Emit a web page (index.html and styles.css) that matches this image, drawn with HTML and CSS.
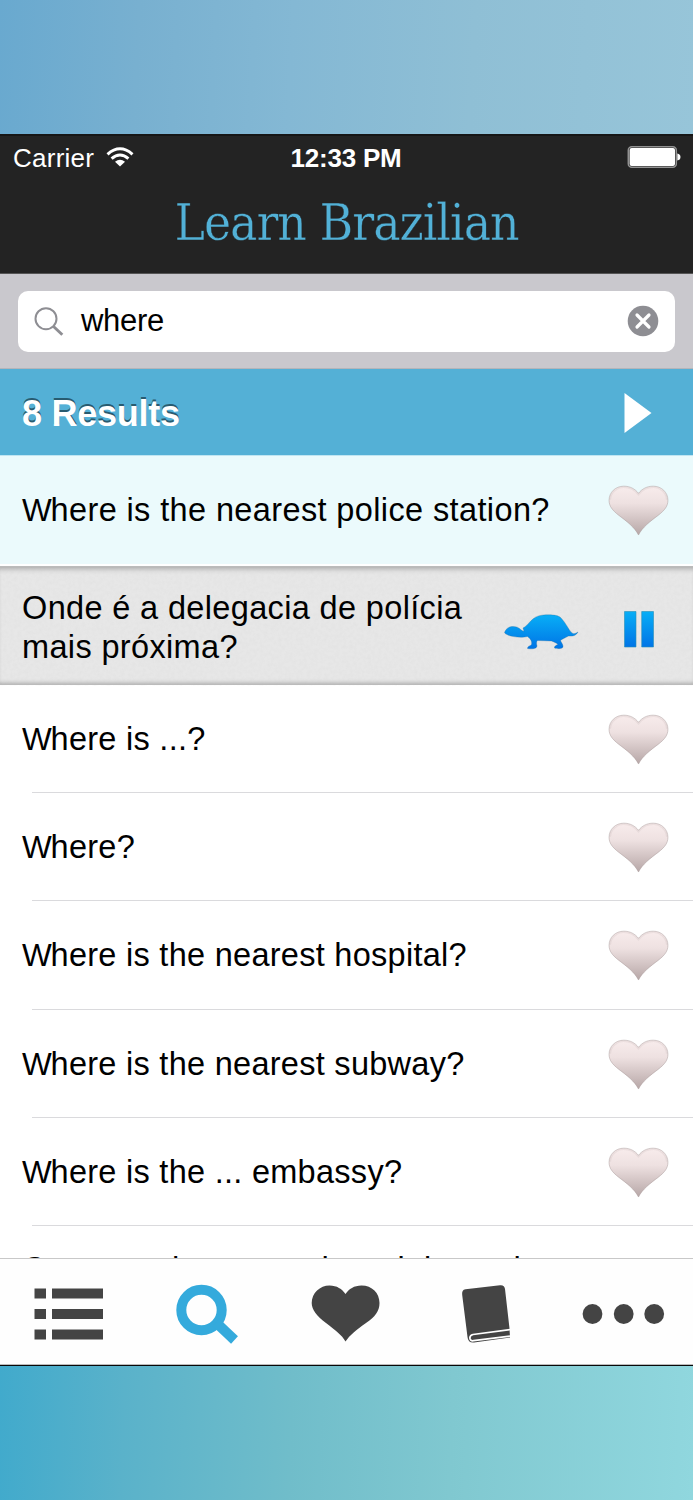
FILE: index.html
```html
<!DOCTYPE html>
<html lang="en">
<head>
<meta charset="utf-8">
<title>Learn Brazilian</title>
<link rel="stylesheet" href="styles.css">
</head>
<body>
<svg class="defs" width="0" height="0" aria-hidden="true">
  <defs>
    <linearGradient id="heartFill" x1="0" y1="0" x2="0" y2="1">
      <stop offset="0" stop-color="#f8ecec"/><stop offset=".35" stop-color="#eee1e1"/><stop offset="1" stop-color="#b7a7a7"/>
    </linearGradient>
    <linearGradient id="blueFill" x1="0" y1="0" x2="0" y2="1">
      <stop offset="0" stop-color="#08aef6"/><stop offset="1" stop-color="#0074e6"/>
    </linearGradient>
    <symbol id="heart" viewBox="0 0 62 52">
      <path d="M31 51C27 43 19 37 11 31C4 25.500 1 21.500 1 15.500C1 7.500 7.500 1.200 16 1.200C22.500 1.200 27.500 4 31 8.500C34.500 4 39.500 1.200 46 1.200C54.500 1.200 61 7.500 61 15.500C61 21.500 58 25.500 51 31C43 37 35 43 31 51Z" fill="url(#heartFill)" stroke="#a99c9c" stroke-opacity=".5" stroke-width="1"/>
      <path d="M2.200 15C2.500 8 9 2.300 16 2.300C22.500 2.300 27.500 5.500 31 10C34.500 5.500 39.500 2.300 46 2.300C53 2.300 59.500 8 59.800 15" fill="none" stroke="#a08f8f" stroke-opacity=".13" stroke-width="1.600"/>
    </symbol>
  </defs>
</svg>
<div class="backdrop backdrop-top"></div>
<main class="phone">
  <header class="header">
    <div class="status">
      <div class="carrier"><span>Carrier</span>
        <svg width="28" height="20" viewBox="0 0 28 20"><g fill="none" stroke="#fff" stroke-width="3"><path d="M1.500 7.300Q14-3.700 26.500 7.300"/><path d="M5.600 11.700Q14 4.300 22.400 11.700"/></g><path d="M9 14.800Q14 10.800 19 14.800L14 19.500Z" fill="#fff"/></svg>
      </div>
      <div class="clock">12:33 PM</div>
      <svg class="battery" width="54" height="22" viewBox="0 0 54 22"><rect x="1.300" y=".8" width="48" height="20.400" rx="3.500" fill="none" stroke="#929292" stroke-width="1.500"/><rect x="2.600" y="2.100" width="45.400" height="17.800" rx="2" fill="#fff"/><path d="M50.300 7.500Q53.500 8 53.500 11T50.300 14.500Z" fill="#fff"/></svg>
    </div>
    <h1 class="title">Learn Brazilian</h1>
  </header>
  <section class="search">
    <div class="field">
      <svg width="30" height="29" viewBox="0 0 30 29" fill="none" stroke="#8e8e93"><circle cx="12" cy="11.700" r="10.500" stroke-width="2"/><path d="M19 19L28.300 27.700" stroke-width="2.900"/></svg>
      <span class="query">where</span>
      <svg width="32" height="32" viewBox="0 0 32 32"><circle cx="16" cy="16" r="15.300" fill="#8e8e93"/><path d="M10 10L22 22M22 10L10 22" stroke="#fff" stroke-width="3.200" stroke-linecap="round"/></svg>
    </div>
  </section>
  <section class="results"><h2>8 Results</h2>
    <svg width="28" height="40" viewBox="0 0 28 40"><path d="M.5 0L27.500 20L.5 40Z" fill="#fff"/></svg>
  </section>
  <section class="list">
    <div class="row selected"><span>Where is the nearest police station?</span><svg class="heart"><use href="#heart"/></svg></div>
    <div class="translation">
      <svg class="grain" width="693" height="119" aria-hidden="true"><filter id="paper" x="0" y="0" width="100%" height="100%"><feTurbulence type="fractalNoise" baseFrequency=".28" numOctaves="3" seed="4"/><feColorMatrix values="0 0 0 0 .5  0 0 0 0 .5  0 0 0 0 .5  .5 0 0 0 -.16"/></filter><rect width="693" height="119" filter="url(#paper)" opacity=".3"/></svg>
      <p>Onde é a delegacia de polícia<br>mais próxima?</p>
      <div class="controls">
        <svg class="turtle" width="75" height="36" viewBox="0 0 75 36"><path d="M1 17.500C3 12 11 11 15.500 14.500C17 16 18.500 17 20 17.300L19 14C25 11 28 2 38 1.200C45 .5 54 .5 57 4C62 9 64 15 68 19C70 20.500 72.500 19 74 18C72 21.500 69 22.500 64.500 22C61 24 58 25 56.500 26.500C57 28 59.500 31 59 33C58 35.500 52 34.500 50.500 34C50 32.500 52 31 54 30.500C52 28.500 50 28 47.500 27L33.500 26.500C32 28 32.500 30 33 32C32.500 35.500 26 35 23.500 34.500C23.500 32 26.500 32 27.500 30.500C28 28 27.500 25.500 23.500 22.500C18 24 7 23 3 20.500C1 19.500 0 19 1 17.500Z" fill="url(#blueFill)" stroke="#286d99" stroke-opacity=".45" stroke-width=".7"/></svg>
        <svg width="30" height="37" viewBox="0 0 30 37"><path d="M.5.5H12V36H.5ZM17.700.5H29.500V36H17.700Z" fill="url(#blueFill)" stroke="#2890b8" stroke-opacity=".6"/></svg>
      </div>
    </div>
    <div class="row"><span>Where is ...?</span><svg class="heart"><use href="#heart"/></svg></div>
    <div class="row"><span>Where?</span><svg class="heart"><use href="#heart"/></svg></div>
    <div class="row"><span>Where is the nearest hospital?</span><svg class="heart"><use href="#heart"/></svg></div>
    <div class="row"><span>Where is the nearest subway?</span><svg class="heart"><use href="#heart"/></svg></div>
    <div class="row"><span>Where is the ... embassy?</span><svg class="heart"><use href="#heart"/></svg></div>
    <div class="clipped">Can you show me where it is on the</div>
  </section>
  <nav class="tabs">
    <svg width="139" height="106" viewBox="0 0 139 106" fill="#444"><path d="M34.500 29.500H46V39.500H34.500ZM52 29.500H103V39.500H52ZM34.500 50H46V60H34.500ZM52 50H103V60H52ZM34.500 70.500H46V80.500H34.500ZM52 70.500H103V80.500H52Z"/></svg>
    <svg width="138" height="106" viewBox="0 0 138 106" fill="none" stroke="#34aadc"><circle cx="62.500" cy="51" r="20.200" stroke-width="10"/><path d="M77 63.500L95.500 81" stroke-width="10"/></svg>
    <svg width="139" height="106" viewBox="0 0 139 106" fill="#444"><path d="M68.500 82.500C65 76 58 71 49 64C40 57 34.700 51 34.700 44C34.700 34 43 26.500 52.500 26.500C60 26.500 65 30 68.500 35C72 30 77 26.500 84.500 26.500C95 26.500 102.500 34 102.500 44C102.500 52 98 58 89 64C79 71 73 76 68.500 82.500Z"/></svg>
    <svg width="138" height="106" viewBox="0 0 138 106"><path d="M49.500 30.300L84 26.200Q88.500 25.700 89 30L93.500 69.500L94 78.500L58 83.500Q52 84 51.500 78L46.200 36Q45.500 31 49.500 30.300Z" fill="#444"/><path d="M94.500 70.500L57 75.500C52.500 76.500 53 82.500 57.500 81.700L94.500 77" fill="none" stroke="#fff" stroke-width="1.700"/></svg>
    <svg width="139" height="106" viewBox="0 0 139 106" fill="#444"><circle cx="38.500" cy="55" r="9.900"/><circle cx="69.700" cy="55" r="9.900"/><circle cx="100.200" cy="55" r="9.900"/></svg>
  </nav>
</main>
<div class="backdrop backdrop-bottom"></div>
</body>
</html>
```

FILE: styles.css
```css
* { box-sizing: border-box; }
body { margin: 0; width: 693px; height: 1500px; overflow: hidden; font-family: "Liberation Sans", Arial, sans-serif; color: #000; }
svg { display: block; flex: none; }
.defs { position: absolute; }
.backdrop-top { height: 134px; background: linear-gradient(93deg, #69a9cf 0%, #78b0d0 20%, #84b8d4 42%, #8fbfd5 68%, #97c5d9 100%); }
.backdrop-bottom { height: 134px; background: linear-gradient(92deg, #41aacc 0%, #5ab2ca 18%, #70bdca 42%, #80c8d0 65%, #90d7de 100%); }
.phone { height: 1232px; display: flex; flex-direction: column; background: #fff; border-bottom: 1px solid #080808; }
.header { height: 140px; background: #232323; border-top: 2px solid #161616; border-bottom: 1px solid #555; }
.status { display: grid; grid-template-columns: 1fr auto 1fr; align-items: center; height: 44px; padding: 0 12px 0 13px; color: #fff; font-size: 26px; }
.carrier { display: flex; align-items: center; gap: 12px; letter-spacing: .25px; }
.carrier svg { margin-top: -3px; }
.clock { font-weight: bold; letter-spacing: -.2px; margin-right: 2px; }
.battery { justify-self: end; margin-top: -2px; }
.title { margin: 12px 0 0; text-align: center; font: normal 51px/62px "DejaVu Serif Condensed", "DejaVu Serif", serif; font-stretch: condensed; letter-spacing: -1px; color: #52b1d7; -webkit-text-stroke: .35px #232323; }
.search { height: 95px; padding: 17px 18px 0; background: #c9c8cd; border-bottom: 1px solid #b3b5ba; }
.field { display: flex; align-items: center; height: 60.5px; padding: 0 16px; border-radius: 10px; background: #fff; font-size: 31px; }
.query { flex: 1; margin-left: 17px; letter-spacing: -.3px; }
.results { display: flex; align-items: center; justify-content: space-between; height: 86px; padding: 2px 41px 0 22px; background: #54b0d6; color: #fff; }
.results h2 { margin: 2px 0 0; font-size: 36px; line-height: 44px; letter-spacing: -.25px; text-shadow: 0 -2px 0 #285b70; }
.list { height: 803px; overflow: hidden; font-size: 32.5px; letter-spacing: .35px; }
.row { display: flex; align-items: center; justify-content: space-between; height: 108.2px; padding: 1px 24px 0 22px; position: relative; letter-spacing: .28px; }
.row span::first-letter { font-size: 31.5px; letter-spacing: -1.2px; }
.row:not(.selected)::after { content: ""; position: absolute; left: 32px; right: 0; bottom: 0; height: 1px; background: #dadadd; }
.row.selected { height: 111px; background: #ebfafc; border-bottom: 2px solid #fff; border-top: 1px solid #bfe5f2; letter-spacing: .38px; }
.heart { width: 61px; height: 51px; }
.translation { position: relative; height: 119px; display: flex; align-items: center; justify-content: space-between; padding: 4px 39px 0 22px; background: #e7e7e7; box-shadow: inset 0 6px 5px -4px #aaa, inset 0 -4px 4px -3px #aaa; border-top: 1px solid #bbb; border-bottom: 1px solid #bbb; }
.grain { position: absolute; inset: 0; }
.translation p { position: relative; margin: 0; line-height: 39px; }
.controls { position: relative; display: flex; align-items: center; gap: 45px; padding-top: 3px; }
.turtle { margin-top: 5px; }
.clipped { padding: 24px 22px 0; line-height: 38px; white-space: nowrap; letter-spacing: .4px; }
.tabs { display: flex; height: 107px; background: #fefefe; border-top: 1px solid #c8c8c8; border-bottom: 1px solid #bbb; }
```
